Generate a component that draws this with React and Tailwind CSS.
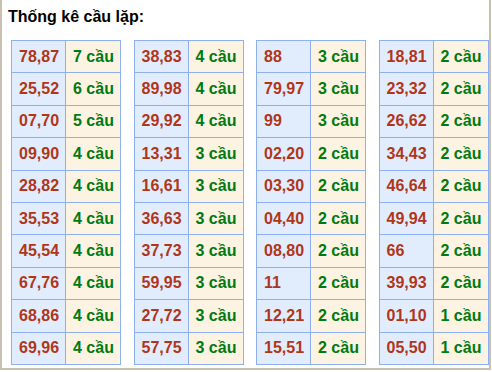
import React from 'react';

const tables = [
  [
    ['78,87', '7'], ['25,52', '6'], ['07,70', '5'], ['09,90', '4'], ['28,82', '4'],
    ['35,53', '4'], ['45,54', '4'], ['67,76', '4'], ['68,86', '4'], ['69,96', '4'],
  ],
  [
    ['38,83', '4'], ['89,98', '4'], ['29,92', '4'], ['13,31', '3'], ['16,61', '3'],
    ['36,63', '3'], ['37,73', '3'], ['59,95', '3'], ['27,72', '3'], ['57,75', '3'],
  ],
  [
    ['88', '3'], ['79,97', '3'], ['99', '3'], ['02,20', '2'], ['03,30', '2'],
    ['04,40', '2'], ['08,80', '2'], ['11', '2'], ['12,21', '2'], ['15,51', '2'],
  ],
  [
    ['18,81', '2'], ['23,32', '2'], ['26,62', '2'], ['34,43', '2'], ['46,64', '2'],
    ['49,94', '2'], ['66', '2'], ['39,93', '2'], ['01,10', '1'], ['05,50', '1'],
  ],
];

const StatTable = ({ rows }) => (
  <div className="grid w-[110px] grid-cols-[53px_54px] grid-rows-[repeat(10,31.4px)] gap-px bg-[#8fb0ee] p-px">
    {rows.map(([pair, count]) => (
      <React.Fragment key={pair}>
        <div className="flex items-center bg-[#e1edfd] pl-[7px] text-[#b0361a]">{pair}</div>
        <div className="flex items-center bg-[#fdf3e2] pl-[7px] text-[#007a12]">{count} cầu</div>
      </React.Fragment>
    ))}
  </div>
);

export default function App() {
  return (
    <div className="h-[372px] w-[492px] bg-white font-['Liberation_Sans',Arial,sans-serif]">
      <div className="h-[370px] w-[491px] border-x-2 border-b-2 border-[#c9c0b2]">
        <div className="pl-[6px] pt-[7px] text-[16px] font-bold leading-[19px] text-black">Thống kê cầu lặp:</div>
        <div className="mt-[14px] flex gap-[12.5px] pl-[9px] text-[16px] font-bold">
          {tables.map((rows, i) => (
            <StatTable key={i} rows={rows} />
          ))}
        </div>
      </div>
    </div>
  );
}
